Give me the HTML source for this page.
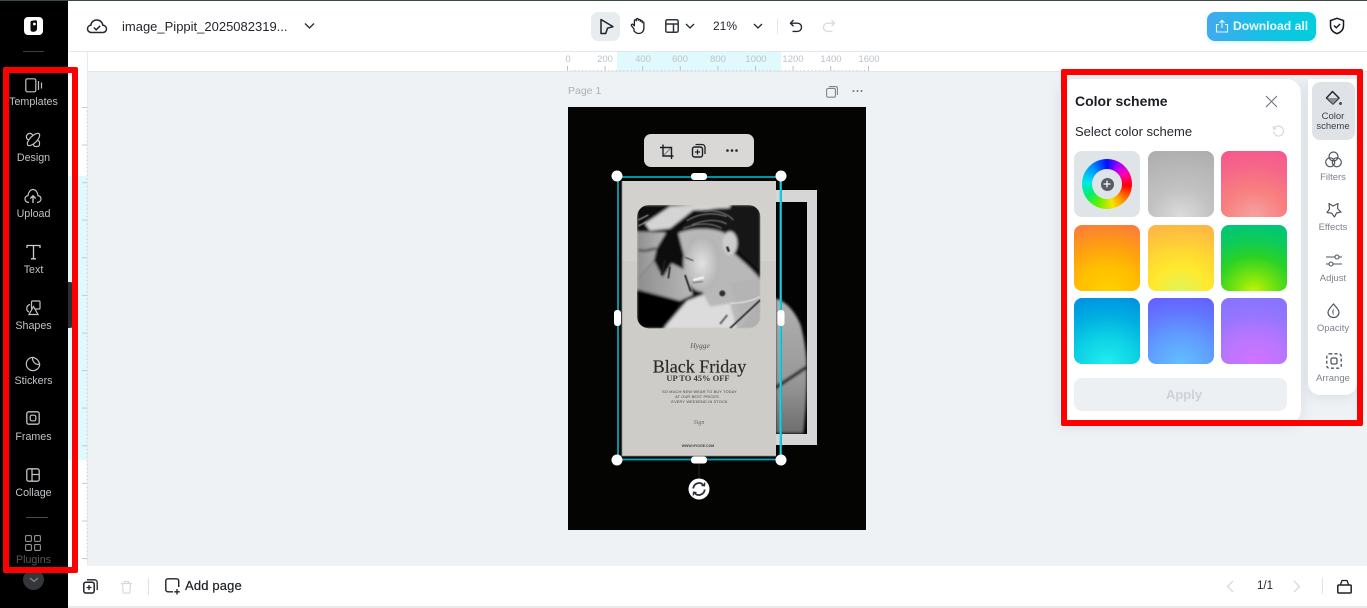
<!DOCTYPE html>
<html lang="en">
<head>
<meta charset="utf-8">
<title>Color scheme</title>
<style>
*{box-sizing:border-box}
html,body{margin:0;padding:0;width:1367px;height:608px;overflow:hidden;background:#fff;font-family:"Liberation Sans",sans-serif}
.a{position:absolute}
#side{left:0;top:0;width:68px;height:608px;background:#000}
.nl{position:absolute;left:0;width:67px;text-align:center;font-size:10.700px;line-height:13px;color:#bfc3c7;white-space:nowrap}
.ic{position:absolute;overflow:visible;fill:none}
.sw{position:absolute;width:66px;height:66px;border-radius:8px}
.tl{position:absolute;left:1308px;width:50px;text-align:center;font-size:9.500px;line-height:10px;color:#7d838c}
.rl{position:absolute;top:54px;width:40px;margin-left:-20px;text-align:center;font-size:9.500px;line-height:12px;color:#bcc3c9}
.red{position:absolute;border:6px solid #f00;border-radius:2px;z-index:50}
</style>
</head>
<body>
<div class="a" style="left:0;top:0;width:1367px;height:1px;background:#3b4a45;z-index:5"></div>

<!-- canvas bg -->
<div class="a" style="left:88px;top:72px;width:1279px;height:494px;background:#eff2f5"></div>

<!-- top bar -->
<div class="a" style="left:68px;top:51px;width:1299px;height:1px;background:#e4e7ea"></div>
<div class="a" style="left:88px;top:71px;width:1279px;height:1px;background:#e2e5e9"></div>
<div class="a" style="left:87px;top:52px;width:1px;height:514px;background:#e8ebee"></div>

<!-- rulers -->
<div class="a" style="left:617px;top:52px;width:164px;height:19px;background:#e0f9fc"></div>
<div class="a" style="left:68px;top:176px;width:19px;height:284px;background:#e0f9fc"></div>
<div class="rl" style="left:568px">0</div><div class="rl" style="left:605px">200</div><div class="rl" style="left:643px">400</div><div class="rl" style="left:680px">600</div><div class="rl" style="left:718px">800</div><div class="rl" style="left:756px">1000</div><div class="rl" style="left:793px">1200</div><div class="rl" style="left:831px">1400</div><div class="rl" style="left:869px">1600</div>
<svg class="a" style="left:0;top:0;z-index:1" width="1367" height="608">
<path d="M567.500 71V66M605.100 71V66M642.700 71V66M680.300 71V66M717.900 71V66M755.500 71V66M793.100 71V66M830.700 71V66M868.500 71V66" stroke="#b9c0c6" stroke-width="1"/>
<path d="M567 70.500H870" stroke="#c4cad0" stroke-width="1" stroke-dasharray="1 2.760"/>
<path d="M87 107V560" stroke="#c4cad0" stroke-width="1" stroke-dasharray="1 2.760"/>
<path d="M82 107.500H87M82 145H87M82 182.600H87M82 220H87M82 257.800H87M82 295.400H87M82 333H87M82 370.600H87M82 408H87M82 445.800H87M82 483.400H87M82 521H87M82 558.600H87" stroke="#c4cad0" stroke-width="1"/>
</svg>

<!-- top bar content -->
<svg class="ic" style="left:86px;top:16px" width="22" height="20" viewBox="0 0 22 20"><path d="M5.500 16.500C2.800 16.500 1.500 14.600 1.500 12.800 1.500 10.800 3 9.500 4.800 9.300 5.200 6 7.700 4 10.800 4c3.200 0 5.600 2.200 6 5.200 2 .2 3.700 1.600 3.700 3.700 0 2-1.600 3.600-3.700 3.600z" stroke="#24282e" stroke-width="1.500"/><path d="M7.800 11.500l2.400 2.300 4-4" stroke="#24282e" stroke-width="1.500"/></svg>
<div class="a" style="left:122px;top:18px;font-size:13px;line-height:17px;color:#23272c;white-space:nowrap">image_Pippit_2025082319...</div>
<svg class="ic" style="left:304px;top:22px" width="11" height="8"><path d="M1 1.500l4.500 4.500L10 1.500" stroke="#24282e" stroke-width="1.300"/></svg>

<div class="a" style="left:591px;top:12px;width:29px;height:29px;border-radius:7px;background:#e8ecef"></div>
<svg class="ic" style="left:599px;top:18px" width="16" height="17"><path d="M2 1.500L14 8.600 8.500 10.200 6.700 15.500H2z" stroke="#1f2329" stroke-width="1.500" stroke-linejoin="round"/></svg>
<svg class="ic" style="left:630px;top:17px" width="16" height="18" viewBox="0 0 16 18"><path d="M4 12L1.600 8.800c-.8-1.100.6-2.200 1.600-1.300L4.400 8.800V3.800c0-1.400 1.900-1.400 1.900 0V2.600c0-1.500 2-1.500 2 0v.8c0-1.300 2-1.300 2 0v1c0-1.300 1.900-1.300 1.900 0v1.300c0-1 1.700-1 1.700.1v5.400c0 3.200-2.400 5.300-5.300 5.300-2.200 0-3.400-1-4.600-2.500z" stroke="#1f2329" stroke-width="1.300" stroke-linejoin="round"/></svg>
<svg class="ic" style="left:665px;top:19px" width="14" height="14"><rect x=".8" y=".8" width="12.400" height="12.400" rx="1.500" stroke="#30353b" stroke-width="1.500"/><path d="M1 5h12M8.500 5v8" stroke="#30353b" stroke-width="1.500"/></svg>
<svg class="ic" style="left:685px;top:23px" width="10" height="7"><path d="M1 1l4 4 4-4" stroke="#24282e" stroke-width="1.300"/></svg>
<div class="a" style="left:713px;top:18px;font-size:12px;line-height:17px;color:#23272c;white-space:nowrap">21%</div>
<svg class="ic" style="left:753px;top:23px" width="10" height="7"><path d="M1 1l4 4 4-4" stroke="#24282e" stroke-width="1.300"/></svg>
<div class="a" style="left:777px;top:19px;width:1px;height:15px;background:#e2e5e8"></div>
<svg class="ic" style="left:789px;top:19px" width="14" height="14"><path d="M4.500 1L1.500 4.200 4.500 7.200M2 4.200h6.500c2.400 0 4 1.700 4 4s-1.600 4.200-4 4.200H3.500" stroke="#24282e" stroke-width="1.400"/></svg>
<svg class="ic" style="left:822px;top:19px" width="14" height="14"><path d="M9.500 1l3 3.200-3 3M12 4.200H5.500c-2.400 0-4 1.700-4 4s1.600 4.200 4 4.200h5" stroke="#d8dde2" stroke-width="1.400"/></svg>

<div class="a" style="left:1207px;top:12px;width:109px;height:29px;border-radius:8px;background:linear-gradient(90deg,#42a9f1,#14c2e4 55%,#00cfdc);box-shadow:0 1px 5px rgba(60,190,230,.25)"></div>
<svg class="ic" style="left:1215px;top:19px" width="14" height="14"><path d="M4 5.500H1.500v7.500h11V5.500H10M7 9V1.500M4.500 3.800L7 1.300l2.500 2.500" stroke="#e6f7fd" stroke-width="1.100"/></svg>
<div class="a" style="left:1233px;top:18px;font-size:12.200px;line-height:16px;font-weight:700;color:#eafaff;white-space:nowrap">Download all</div>
<svg class="ic" style="left:1329px;top:17px" width="16" height="18"><path d="M8 1.300l6.500 2.200v5.200c0 3.800-2.700 6.500-6.500 8-3.800-1.500-6.500-4.200-6.500-8V3.500z" stroke="#16191d" stroke-width="1.500"/><path d="M5 8.500l2.300 2.300 3.800-3.800" stroke="#16191d" stroke-width="1.400"/></svg>

<!-- sidebar -->
<div id="side" class="a"></div>
<div class="a" style="left:68px;top:282px;width:7px;height:46px;background:#2e2f31;border-radius:0 5px 5px 0"></div>
<div class="a" style="left:24px;top:17px;width:19px;height:18px;background:#fff;border-radius:4px"></div>
<svg class="ic" style="left:24px;top:17px" width="19" height="18"><path d="M6.500 5.200c0-.8.600-1.300 1.300-1.400l3.700-.5c.8-.1 1.500.5 1.500 1.300v7.200c0 1.700-1.300 2.900-2.900 2.900H8.300c-1 0-1.800-.8-1.800-1.800z" fill="#0a0a0a"/><circle cx="10.400" cy="7" r="1.400" fill="#fff"/></svg>
<div class="a" style="left:23px;top:51px;width:21px;height:1px;background:#3d3f42"></div>
<div class="a" style="left:26px;top:517px;width:22px;height:1px;background:#4a4c50"></div>

<svg class="ic" style="left:25px;top:78px" width="18" height="15"><rect x=".8" y=".8" width="10" height="13" rx="1.500" stroke="#bfc3c7" stroke-width="1.200"/><path d="M13.500 3v9M16.500 4.500v6" stroke="#bfc3c7" stroke-width="1.200"/></svg>
<div class="nl" style="top:96px">Templates</div>
<svg class="ic" style="left:25px;top:132px" width="16" height="16"><ellipse cx="4.800" cy="4.800" rx="3.400" ry="3.400" stroke="#bfc3c7" stroke-width="1.200"/><rect x="8.500" y="8.500" width="6" height="6" rx="2" stroke="#bfc3c7" stroke-width="1.200"/><ellipse cx="8.500" cy="7.500" rx="8" ry="3.400" transform="rotate(-45 8.500 7.500)" stroke="#bfc3c7" stroke-width="1.200" fill="#000"/></svg>
<div class="nl" style="top:152px">Design</div>
<svg class="ic" style="left:24px;top:188px" width="18" height="16"><path d="M5 14.500c-2.300 0-4-1.500-4-3.500 0-1.900 1.300-3.100 3-3.400C4.300 4 6.500 1.500 9 1.500S13.700 4 14 7.600c1.700.3 3 1.500 3 3.400s-1.700 3.500-4 3.500" stroke="#bfc3c7" stroke-width="1.200"/><path d="M9 15V8M6.300 10.500L9 7.800l2.700 2.700" stroke="#bfc3c7" stroke-width="1.400"/></svg>
<div class="nl" style="top:208px">Upload</div>
<svg class="ic" style="left:26px;top:244px" width="15" height="16"><path d="M1 4V1.500h13V4M7.500 1.500V14.500M5 14.800h5" stroke="#c8ccd0" stroke-width="1.300"/></svg>
<div class="nl" style="top:264px">Text</div>
<svg class="ic" style="left:25px;top:300px" width="16" height="16"><rect x="6.500" y="1" width="8.500" height="8" rx="1" stroke="#bfc3c7" stroke-width="1.200"/><path d="M5 4.500A4 4 0 0 0 4 12M8.500 6.500l4.500 8H4z" stroke="#bfc3c7" stroke-width="1.200" fill="#000"/></svg>
<div class="nl" style="top:320px">Shapes</div>
<svg class="ic" style="left:25px;top:356px" width="16" height="16"><path d="M7.500 1.300A6.700 6.700 0 1 0 14.700 8.500C10.500 8.800 7.200 6 7.500 1.300zM7.500 1.300c3.500.5 6.500 3.200 7.200 7.200" stroke="#bfc3c7" stroke-width="1.200"/></svg>
<div class="nl" style="top:375px">Stickers</div>
<svg class="ic" style="left:26px;top:411px" width="14" height="14"><rect x=".8" y=".8" width="12.400" height="12.400" rx="2" stroke="#bfc3c7" stroke-width="1.300"/><rect x="4.200" y="4.200" width="5.600" height="5.600" rx="1.500" stroke="#bfc3c7" stroke-width="1.200"/></svg>
<div class="nl" style="top:431px">Frames</div>
<svg class="ic" style="left:26px;top:468px" width="14" height="14"><rect x=".8" y=".8" width="12.400" height="12.400" rx="2" stroke="#bfc3c7" stroke-width="1.300"/><path d="M6 1v12M6 6.500h7" stroke="#bfc3c7" stroke-width="1.300"/></svg>
<div class="nl" style="top:487px">Collage</div>
<svg class="ic" style="left:25px;top:535px" width="16" height="16"><rect x=".6" y=".6" width="5.800" height="5.800" rx="1" stroke="#8f9397" stroke-width="1.100"/><rect x="9.600" y=".6" width="5.800" height="5.800" rx="1" stroke="#8f9397" stroke-width="1.100"/><rect x=".6" y="9.600" width="5.800" height="5.800" rx="1" stroke="#8f9397" stroke-width="1.100"/><rect x="9.600" y="9.600" width="5.800" height="5.800" rx="1" stroke="#8f9397" stroke-width="1.100"/></svg>
<div class="nl" style="top:554px;color:#56595c">Plugins</div>
<div class="a" style="left:23px;top:569px;width:21px;height:21px;border-radius:50%;background:#35363a"></div>
<svg class="ic" style="left:29px;top:577px" width="10" height="6"><path d="M1 1l4 3.500L9 1" stroke="#85888c" stroke-width="1.200"/></svg>

<!-- design page -->
<div class="a" style="left:568px;top:85px;font-size:10.500px;line-height:13px;color:#aab1b8">Page 1</div>
<svg class="ic" style="left:826px;top:86px" width="12" height="12"><rect x=".6" y="2.400" width="8.800" height="8.800" rx="1.500" stroke="#7f868d" stroke-width="1.100"/><path d="M3 .6h7c.8 0 1.400.6 1.400 1.400v7" stroke="#7f868d" stroke-width="1.100"/></svg>
<svg class="ic" style="left:852px;top:89px" width="11" height="4"><circle cx="1.500" cy="2" r="1" fill="#6f767d"/><circle cx="5.500" cy="2" r="1" fill="#6f767d"/><circle cx="9.500" cy="2" r="1" fill="#6f767d"/></svg>

<div class="a" style="left:568px;top:107px;width:298px;height:423px;background:#040403"></div>

<svg class="a" style="left:0;top:0;z-index:2" width="1367" height="608">
<defs>
<clipPath id="pc"><rect x="21" y="15" width="370" height="370" rx="36"/></clipPath>
<filter id="bl" x="-5%" y="-5%" width="110%" height="110%"><feGaussianBlur stdDeviation="4"/></filter>
<filter id="bs" x="-5%" y="-5%" width="110%" height="110%"><feGaussianBlur stdDeviation="1.500"/></filter>
<filter id="tb" x="-5%" y="-20%" width="110%" height="140%"><feGaussianBlur stdDeviation=".28"/></filter>
<linearGradient id="gsh" x1="0" y1="0" x2="0" y2="1"><stop offset="0" stop-color="#b0b0b0"/><stop offset=".6" stop-color="#999"/><stop offset="1" stop-color="#6d6d6d"/></linearGradient>
<radialGradient id="fc" cx=".5" cy=".5" r=".6"><stop offset="0" stop-color="#e2e2e2"/><stop offset="1" stop-color="#a8a8a8"/></radialGradient>
<linearGradient id="arm" x1="0" y1="0" x2="1" y2="0"><stop offset="0" stop-color="#8e8e8e"/><stop offset="1" stop-color="#b8b8b8"/></linearGradient>
</defs>
<!-- back photo -->
<rect x="770" y="190" width="47" height="255" fill="#d6d6d6"/>
<rect x="770" y="202" width="37" height="232" fill="#030303"/>
<g transform="translate(770 185) scale(.3333)" filter="url(#bl)">
<path d="M17 340C50 350 75 380 92 420 105 470 110 510 110 560 110 640 105 700 100 745H17z" fill="url(#gsh)"/>
<path d="M112 545L17 608" stroke="#111" stroke-width="10"/>
</g>
<rect x="807" y="202" width="10" height="232" fill="#d6d6d6"/>
<rect x="770" y="434" width="47" height="11" fill="#d6d6d6"/>
<!-- poster -->
<rect x="622" y="181" width="154" height="275" fill="#cdccc8"/>
<rect x="622" y="181" width="154" height="80" fill="#d3d2ce" opacity=".8"/>
<path d="M622 181V456H776" fill="none" stroke="#8c8b88" stroke-width=".8"/>
<!-- main photo -->
<g transform="translate(630 200) scale(.3333)">
<g clip-path="url(#pc)"><g filter="url(#bl)">
<rect x="21" y="15" width="370" height="370" fill="#0a0a0a"/>
<path d="M21 95L108 98 80 145 72 180 21 240z" fill="url(#arm)"/>
<path d="M45 70L120 20 300 8 300 30 190 30 120 85 60 92z" fill="#d4d4d4"/>
<path d="M25 150C45 155 60 150 78 145" stroke="#444" stroke-width="7" fill="none"/>
<path d="M21 240L72 182 98 232 125 190 165 210 188 285 150 302 21 268z" fill="url(#arm)"/>
<path d="M148 98C165 55 210 22 290 24L391 15V215L335 160 300 90 225 85z" fill="#161616"/>
<path d="M145 100C175 85 245 80 285 100L300 150C340 185 375 215 391 240V385H100L172 302 222 282 190 250 170 195z" fill="#b8b8b8"/>
<ellipse cx="215" cy="190" rx="55" ry="85" fill="url(#fc)"/>
<ellipse cx="300" cy="130" rx="22" ry="36" fill="#cdcdcd"/>
<path d="M102 385L172 302 222 285 240 320 300 310 320 385z" fill="#dcdcdc"/>
<path d="M21 275L150 305 102 385H21z" fill="#050505"/>
<path d="M391 235V300L330 340 300 250z" fill="#b4b4b4"/>
<path d="M391 300V385H330z" fill="#b0b0b0"/>
</g>
<g filter="url(#bs)" fill="none">
<path d="M170 62C205 40 250 35 290 50M185 75C220 60 260 55 290 72M220 32C260 30 290 38 310 60M160 85C200 70 240 65 275 85" stroke="#6a6a6a" stroke-width="4"/>
<path d="M165 225L182 275" stroke="#1a1a1a" stroke-width="5"/>
<path d="M95 225L105 180M115 235L120 200" stroke="#222" stroke-width="5"/>
<path d="M291 140L297 155" stroke="#222" stroke-width="7"/>
<path d="M165 172L190 182" stroke="#555" stroke-width="4"/>
<path d="M190 240L222 232" stroke="#f5f5f5" stroke-width="7"/><path d="M188 248L218 245" stroke="#666" stroke-width="3"/>
<path d="M391 300L300 385" stroke="#222" stroke-width="5"/>
<circle cx="277" cy="280" r="9" fill="#2e2e2e"/>
<path d="M270 372L292 345" stroke="#666" stroke-width="6"/>
<path d="M300 310C330 310 360 305 390 290" stroke="#eee" stroke-width="3"/>
<path d="M25 60L55 45M25 78L50 65" stroke="#aaa" stroke-width="3"/>
</g></g></g>
<!-- poster text -->
<g filter="url(#tb)">
<text x="700" y="348" text-anchor="middle" font-family="Liberation Serif" font-style="italic" font-size="7.500" fill="#555">Hygge</text>
<text x="699.500" y="372.500" text-anchor="middle" font-family="Liberation Serif" font-size="18" fill="#2a2a2a" stroke="#2a2a2a" stroke-width=".2">Black Friday</text>
<text x="698" y="381" text-anchor="middle" font-family="Liberation Serif" font-size="8.500" font-weight="700" fill="#3a3a3a">UP TO 45% OFF</text>
<text x="699.500" y="393" text-anchor="middle" font-family="Liberation Sans" font-size="3.800" fill="#444" letter-spacing=".2">SO MUCH NEW WEAR TO BUY TODAY</text>
<text x="697" y="398" text-anchor="middle" font-family="Liberation Sans" font-size="3.800" fill="#444" letter-spacing=".2">AT OUR BEST PRICES</text>
<text x="699.500" y="403" text-anchor="middle" font-family="Liberation Sans" font-size="3.800" fill="#444" letter-spacing=".2">EVERY WEEKEND IN STOCK</text>
<text x="699" y="424" text-anchor="middle" font-family="Liberation Serif" font-style="italic" font-size="6" fill="#666">Sign</text>
<text x="698" y="447" text-anchor="middle" font-family="Liberation Sans" font-size="3.500" font-weight="700" fill="#444">WWW.HYGGE.COM</text>
</g>

<!-- selection -->
<rect x="618" y="177" width="163" height="282.500" fill="none" stroke="#00a4b4" stroke-width="1.800"/>
<path d="M780.500 181V457" stroke="#12d2e6" stroke-width="1.800"/>
<path d="M699 460V478" stroke="#222" stroke-width="1"/>
<circle cx="617" cy="176" r="5.500" fill="#fff"/><circle cx="781" cy="176" r="5.500" fill="#fff"/><circle cx="617" cy="460" r="5.500" fill="#fff"/><circle cx="781" cy="460" r="5.500" fill="#fff"/>
<rect x="691" y="173" width="16" height="7" rx="3" fill="#fff"/><rect x="691" y="456.500" width="16" height="7" rx="3" fill="#fff"/>
<rect x="614" y="310" width="7" height="16" rx="3" fill="#fff"/><rect x="777.500" y="310" width="7" height="16" rx="3" fill="#fff"/>
<circle cx="699" cy="489" r="10.500" fill="#fff"/>
<path d="M693.300 488.500a5.800 5.800 0 0 1 10.200-3.400M704.700 489.500a5.800 5.800 0 0 1-10.200 3.400" fill="none" stroke="#2b2e33" stroke-width="1.800"/>
<path d="M701.500 485.500l3 .3.200-3.200M696.500 492.500l-3-.3-.2 3.200" fill="none" stroke="#2b2e33" stroke-width="1.300"/>
<!-- float toolbar -->
<rect x="644" y="134" width="110" height="33" rx="7" fill="#d9d8d6"/>
<path d="M663 144.500V156H673.500M660 147.500H671.500V159" fill="none" stroke="#1d1f22" stroke-width="1.400"/><path d="M664 155L670.500 148.500" stroke="#777" stroke-width="1"/>
<rect x="692.500" y="147" width="10" height="10" rx="2" fill="none" stroke="#1d1f22" stroke-width="1.400"/>
<path d="M695.500 144.500H702c1.700 0 3 1.300 3 3V154" fill="none" stroke="#1d1f22" stroke-width="1.300"/>
<path d="M697.500 149.500v5M695 152h5" stroke="#1d1f22" stroke-width="1.200"/>
<circle cx="727.500" cy="150.500" r="1.300" fill="#1d1f22"/><circle cx="732" cy="150.500" r="1.300" fill="#1d1f22"/><circle cx="736.500" cy="150.500" r="1.300" fill="#1d1f22"/>
</svg>

<!-- bottom bar -->
<div class="a" style="left:68px;top:566px;width:1299px;height:41px;background:#fff"></div>
<div class="a" style="left:68px;top:606px;width:1299px;height:2px;background:#e8eaed"></div>
<svg class="ic" style="left:83px;top:579px;z-index:3" width="15" height="15"><rect x=".8" y="3.200" width="10.400" height="10.800" rx="2" stroke="#1f2226" stroke-width="1.500"/><path d="M4 .8h7.500c1.500 0 2.700 1.200 2.700 2.700V11" stroke="#1f2226" stroke-width="1.300"/><path d="M6 6v5M3.500 8.500h5" stroke="#1f2226" stroke-width="1.300"/></svg>
<svg class="ic" style="left:120px;top:580px;z-index:3" width="13" height="14"><path d="M1 3.500h11M4.500 3.500V1.500h4v2M2.500 3.500l.7 9.500h6.600l.7-9.500" stroke="#d5dae0" stroke-width="1.200"/></svg>
<div class="a" style="left:148px;top:578px;width:1px;height:17px;background:#dfe2e6;z-index:3"></div>
<svg class="ic" style="left:165px;top:578px;z-index:3" width="15" height="17"><path d="M8 13.800H3c-1.300 0-2.200-.9-2.200-2.200V3c0-1.300.9-2.200 2.200-2.200h8.500c1.300 0 2.200.9 2.200 2.200v6" stroke="#1f2226" stroke-width="1.400"/><path d="M12 11v5.500M9.300 13.800h5.400" stroke="#1f2226" stroke-width="1.300"/></svg>
<div class="a" style="left:185px;top:578px;font-size:13px;line-height:16px;font-weight:400;color:#1d2024;white-space:nowrap;z-index:3;letter-spacing:.15px;-webkit-text-stroke:.2px #1d2024">Add page</div>
<svg class="ic" style="left:1226px;top:580px;z-index:3" width="8" height="13"><path d="M7 1L1.500 6.500 7 12" stroke="#d5dae0" stroke-width="1.300"/></svg>
<div class="a" style="left:1257px;top:578px;font-size:11.500px;line-height:16px;color:#1d2024;z-index:3">1/1</div>
<svg class="ic" style="left:1293px;top:580px;z-index:3" width="8" height="13"><path d="M1 1l5.500 5.500L1 12" stroke="#d5dae0" stroke-width="1.300"/></svg>
<div class="a" style="left:1322px;top:578px;width:1px;height:16px;background:#dfe2e6;z-index:3"></div>
<svg class="ic" style="left:1337px;top:579px;z-index:3" width="15" height="15"><rect x=".8" y="6" width="13.400" height="8" rx="1" stroke="#1f2226" stroke-width="1.500"/><path d="M3.500 5.500L5 1.500h5l1.500 4" stroke="#1f2226" stroke-width="1.300"/></svg>

<!-- right panel -->
<div class="a" style="left:1060px;top:79px;width:241px;height:345px;background:#fff;border-radius:14px 14px 14px 0;box-shadow:0 2px 14px rgba(60,80,100,.12);z-index:3"></div>
<div class="a" style="left:1308px;top:79px;width:49px;height:316px;background:#fff;border-radius:0 0 12px 12px;box-shadow:0 2px 14px rgba(60,80,100,.12);z-index:3"></div>
<div class="a" style="left:1312px;top:82px;width:43px;height:58px;background:#dfe3e7;border-radius:8px;z-index:3"></div>

<div style="position:absolute;left:0;top:0;z-index:4;width:0;height:0">
<div class="a" style="left:1075px;top:93px;font-size:14px;line-height:17px;font-weight:700;color:#1b1e22;white-space:nowrap">Color scheme</div>
<svg class="ic" style="left:1265px;top:95px" width="13" height="13"><path d="M1 1l11 11M12 1L1 12" stroke="#6d737b" stroke-width="1.100"/></svg>
<div class="a" style="left:1075px;top:124px;font-size:13px;line-height:16px;color:#23272c;white-space:nowrap">Select color scheme</div>
<svg class="ic" style="left:1272px;top:125px" width="13" height="13"><path d="M2.500 3A5 5 0 1 1 1.500 6.500M1.500 1v3h3" stroke="#d4d9de" stroke-width="1.200"/></svg>

<div class="sw" style="left:1074px;top:151px;background:#dfe4e8"></div>
<div class="a" style="left:1082px;top:159px;width:50px;height:50px;border-radius:50%;background:conic-gradient(#0010ff 0deg,#a000ff 30deg,#ff00b0 60deg,#ff0000 95deg,#ff9000 135deg,#f5e500 165deg,#60f000 205deg,#00ee70 240deg,#00e8e8 275deg,#0090ff 320deg,#0010ff 360deg)"></div>
<div class="a" style="left:1092px;top:169px;width:30px;height:30px;border-radius:50%;background:#dfe4e8"></div>
<div class="a" style="left:1100.500px;top:177.500px;width:13px;height:13px;border-radius:50%;background:#555b67"></div>
<svg class="ic" style="left:1103px;top:180px" width="8" height="8"><path d="M4 .5v7M.5 4h7" stroke="#fff" stroke-width="1.200"/></svg>

<div class="sw" style="left:1148px;top:151px;background:radial-gradient(ellipse 120% 105% at 50% 100%,#dcdcdc 0%,#c2c2c2 40%,#aeaeae 100%)"></div>
<div class="sw" style="left:1221px;top:151px;background:radial-gradient(ellipse 120% 105% at 50% 100%,#f4a3a3 0%,#f87f7e 40%,#f6658a 75%,#f6598c 100%)"></div>
<div class="sw" style="left:1074px;top:225px;background:radial-gradient(ellipse 120% 105% at 50% 100%,#ffd000 0%,#ffc000 35%,#ff9f10 65%,#fc7c3a 100%)"></div>
<div class="sw" style="left:1148px;top:225px;background:radial-gradient(ellipse 120% 105% at 50% 100%,#dff55a 0%,#ffe92e 35%,#ffd632 60%,#ffb347 100%)"></div>
<div class="sw" style="left:1221px;top:225px;background:radial-gradient(ellipse 120% 105% at 50% 100%,#c0f505 0%,#7be40f 22%,#2ad225 50%,#0dcb5a 75%,#00c677 100%)"></div>
<div class="sw" style="left:1074px;top:298px;background:radial-gradient(ellipse 120% 105% at 50% 100%,#22eeee 0%,#0cd0e4 40%,#00aee2 70%,#0093e0 100%)"></div>
<div class="sw" style="left:1148px;top:298px;background:radial-gradient(ellipse 120% 105% at 50% 100%,#62bfff 0%,#609eff 40%,#6277ff 75%,#6560ff 100%)"></div>
<div class="sw" style="left:1221px;top:298px;background:radial-gradient(ellipse 120% 105% at 50% 100%,#d472ff 0%,#b876ff 40%,#9375ff 75%,#8674ff 100%)"></div>

<div class="a" style="left:1074px;top:378px;width:213px;height:33px;border-radius:8px;background:#edf0f3;padding-left:7px;text-align:center;font-size:13px;line-height:33px;font-weight:700;color:#ccd2d8">Apply</div>

<svg class="ic" style="left:1325px;top:90px" width="18" height="18"><path d="M7.500 1.500L14 8 8 14 1.500 8z" stroke="#24282e" stroke-width="1.500" stroke-linejoin="round"/><path d="M2 8h11.500L8 14z" fill="#8a9098"/><circle cx="15.500" cy="13.500" r="1.500" fill="#4a5058"/></svg>
<div class="tl" style="top:112px;color:#3a3f46">Color<br>scheme</div>
<svg class="ic" style="left:1325px;top:151px" width="17" height="17"><circle cx="8.500" cy="5.500" r="4.500" stroke="#4e545c" stroke-width="1.200"/><circle cx="5.200" cy="11.300" r="4.500" stroke="#4e545c" stroke-width="1.200"/><circle cx="11.800" cy="11.300" r="4.500" stroke="#4e545c" stroke-width="1.200"/></svg>
<div class="tl" style="top:173px">Filters</div>
<svg class="ic" style="left:1326px;top:202px" width="16" height="16"><path d="M3 1.500l4 2.500 5-2.500-.5 5 3.500 3.500-4.500 1-2 4-2.800-3.800L1 10.500l2.500-3.500z" stroke="#4e545c" stroke-width="1.200" stroke-linejoin="round"/></svg>
<div class="tl" style="top:223px">Effects</div>
<svg class="ic" style="left:1326px;top:253px" width="16" height="15"><path d="M0 4h9M13 4h3M0 11h3M7 11h9" stroke="#4e545c" stroke-width="1.100"/><circle cx="11" cy="4" r="2" stroke="#4e545c" stroke-width="1.100"/><circle cx="5" cy="11" r="2" stroke="#4e545c" stroke-width="1.100"/></svg>
<div class="tl" style="top:274px">Adjust</div>
<svg class="ic" style="left:1327px;top:303px" width="13" height="15"><path d="M6.500 1C4 4 1 6.500 1 9.500a5.500 5 0 0 0 11 0C12 6.500 9 4 6.500 1z" stroke="#4e545c" stroke-width="1.200"/><path d="M6.500 5.500C5 7.500 5 10 6.500 12.500z" fill="#4e545c"/></svg>
<div class="tl" style="top:324px">Opacity</div>
<svg class="ic" style="left:1326px;top:353px" width="16" height="16"><rect x=".8" y=".8" width="14.400" height="14.400" rx="2.500" stroke="#4e545c" stroke-width="1.300" stroke-dasharray="3 2.200"/><rect x="5" y="5" width="6" height="6" rx="1.500" stroke="#4e545c" stroke-width="1.300"/></svg>
<div class="tl" style="top:374px">Arrange</div>
</div>

<!-- red annotations -->
<div class="red" style="left:3px;top:67px;width:75px;height:506px"></div>
<div class="red" style="left:1061px;top:69px;width:302px;height:357px"></div>
</body>
</html>
